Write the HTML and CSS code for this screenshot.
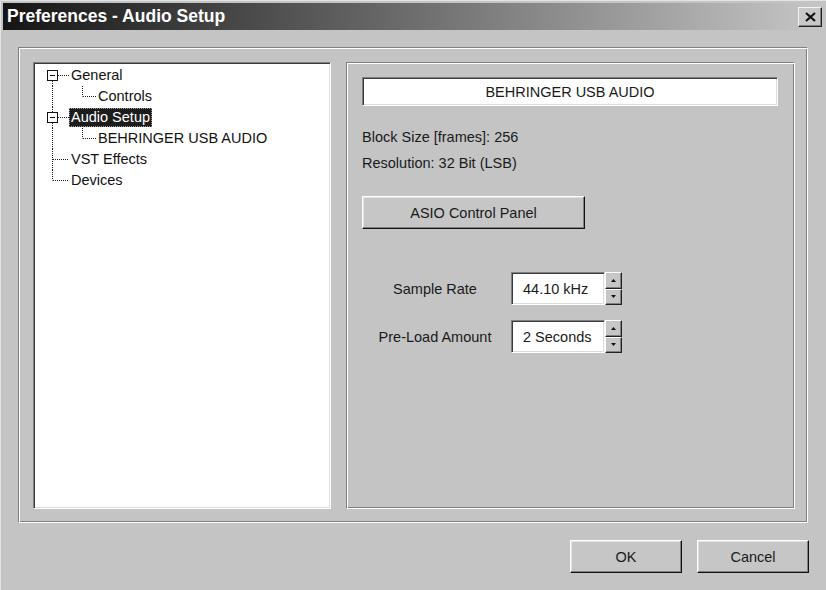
FILE: index.html
```html
<!DOCTYPE html>
<html lang="en">
<head>
    <meta charset="UTF-8">
    <title>Preferences - Audio Setup</title>
    <link rel="stylesheet" href="styles.css">
</head>
<body>
<div class="window">
    <div class="titlebar">
        <span class="title">Preferences - Audio Setup</span>
        <button class="close" title="Close">
            <svg width="11" height="10" viewBox="0 0 11 10"><path d="M1 1L10 9M10 1L1 9" stroke="#111" stroke-width="2.2" fill="none"/></svg>
        </button>
    </div>

    <div class="content">
        <div class="group">
            <!-- Tree of preference pages -->
            <div class="tree">
                <div class="node">
                    <svg class="gutter" width="34" height="21">
                        <rect x="12.5" y="5.5" width="10" height="10" fill="#fff" stroke="#111"/>
                        <path d="M15 10.5H20" stroke="#111"/>
                        <path d="M17.5 16V21M23 10.5H34" stroke="#222" stroke-dasharray="1 1"/>
                    </svg>
                    <span class="label">General</span>
                </div>
                <div class="node">
                    <svg class="gutter" width="61" height="21">
                        <path d="M17.5 0V21M47.5 0V10.5M48 10.5H61" stroke="#222" stroke-dasharray="1 1"/>
                    </svg>
                    <span class="label">Controls</span>
                </div>
                <div class="node">
                    <svg class="gutter" width="34" height="21">
                        <path d="M17.5 0V5M17.5 16V21M23 10.5H34" stroke="#222" stroke-dasharray="1 1"/>
                        <rect x="12.5" y="5.5" width="10" height="10" fill="#fff" stroke="#111"/>
                        <path d="M15 10.5H20" stroke="#111"/>
                    </svg>
                    <span class="label selected">Audio Setup</span>
                </div>
                <div class="node">
                    <svg class="gutter" width="61" height="21">
                        <path d="M17.5 0V21M47.5 0V10.5M48 10.5H61" stroke="#222" stroke-dasharray="1 1"/>
                    </svg>
                    <span class="label">BEHRINGER USB AUDIO</span>
                </div>
                <div class="node">
                    <svg class="gutter" width="34" height="21">
                        <path d="M17.5 0V21M18 10.5H34" stroke="#222" stroke-dasharray="1 1"/>
                    </svg>
                    <span class="label">VST Effects</span>
                </div>
                <div class="node">
                    <svg class="gutter" width="34" height="21">
                        <path d="M17.5 0V10.5M18 10.5H34" stroke="#222" stroke-dasharray="1 1"/>
                    </svg>
                    <span class="label">Devices</span>
                </div>
            </div>

            <!-- Audio device settings -->
            <div class="settings">
                <div class="device-name sunken">BEHRINGER USB AUDIO</div>
                <p class="info first">Block Size [frames]: 256</p>
                <p class="info">Resolution: 32 Bit (LSB)</p>
                <button class="btn asio">ASIO Control Panel</button>

                <div class="spin-row">
                    <span class="spin-label">Sample Rate</span>
                    <div class="spin-value sunken">44.10 kHz</div>
                    <div class="spin-buttons">
                        <button class="spin-btn"><svg width="5" height="3"><path d="M0 3H5L2.5 0Z" fill="#111"/></svg></button>
                        <button class="spin-btn"><svg width="5" height="3"><path d="M0 0H5L2.5 3Z" fill="#111"/></svg></button>
                    </div>
                </div>
                <div class="spin-row">
                    <span class="spin-label">Pre-Load Amount</span>
                    <div class="spin-value sunken">2 Seconds</div>
                    <div class="spin-buttons">
                        <button class="spin-btn"><svg width="5" height="3"><path d="M0 3H5L2.5 0Z" fill="#111"/></svg></button>
                        <button class="spin-btn"><svg width="5" height="3"><path d="M0 0H5L2.5 3Z" fill="#111"/></svg></button>
                    </div>
                </div>
            </div>
        </div>

        <div class="actions">
            <button class="btn dialog-btn">OK</button>
            <button class="btn dialog-btn">Cancel</button>
        </div>
    </div>
</div>
</body>
</html>
```

FILE: styles.css
```css
body {
    margin: 0;
    background-color: #c4c4c4;
    font-family: "Liberation Sans", Arial, sans-serif;
    font-size: 14.5px;
    color: #1a1a1a;
}
button {
    font-family: inherit;
    font-size: inherit;
    color: inherit;
    padding: 0;
    cursor: pointer;
}
.window {
    width: 826px;
    height: 590px;
    box-sizing: border-box;
    padding: 3px 3px 0 3px;
    background-color: #c4c4c4;
    border-top: 1px solid #e4e4e4;
    border-left: 1px solid #e4e4e4;
}
.titlebar {
    height: 27px;
    margin-top: -1px;
    margin-left: -1px;
    display: flex;
    align-items: center;
    justify-content: space-between;
    background: linear-gradient(to right, #151515, #c6c6c6);
}
.title {
    color: #fff;
    font-weight: bold;
    font-size: 17.5px;
    padding-left: 4px;
}
.close {
    width: 24px;
    height: 20px;
    margin-right: 1px;
    display: flex;
    align-items: center;
    justify-content: center;
    background-color: #c8c8c8;
    border: 1px solid;
    border-color: #f4f4f4 #222 #222 #f4f4f4;
    box-shadow: inset -1px -1px #808080;
}

.content {
    padding: 17px 14px 0 14px;
}
.group {
    display: flex;
    gap: 15px;
    width: 790px;
    height: 476px;
    box-sizing: border-box;
    padding: 14px 12px 13px 14px;
    border: 1px solid;
    border-color: #808080 #fff #fff #808080;
    box-shadow: inset 1px 1px #fff, inset -1px -1px #808080;
}

.sunken {
    background-color: #fff;
    border: 1px solid;
    border-color: #808080 #fff #fff #808080;
    box-shadow: inset 1px 1px #3a3a3a, inset -1px -1px #dcdcdc;
}
.tree {
    width: 298px;
    box-sizing: border-box;
    padding: 2px 1px;
    background-color: #fff;
    border: 1px solid;
    border-color: #808080 #fff #fff #808080;
    box-shadow: inset 1px 1px #3a3a3a, inset -1px -1px #dcdcdc;
    color: #111;
}
.node {
    display: flex;
    align-items: center;
    height: 21px;
}
.gutter {
    flex: none;
    display: block;
}
.label {
    line-height: 17px;
    padding: 0 1px;
    border: 1px solid transparent;
}
.selected {
    background-color: #1c1c1c;
    color: #fff;
    border: 1px dotted #9a9a9a;
}

.settings {
    flex: 1;
    box-sizing: border-box;
    padding: 14px 16px 0 15px;
    border: 1px solid;
    border-color: #808080 #fff #fff #808080;
    box-shadow: inset 1px 1px #fff, inset -1px -1px #808080;
}
.device-name {
    height: 29px;
    box-sizing: border-box;
    display: flex;
    align-items: center;
    justify-content: center;
}
.info {
    margin: 6px 0 0 0;
    line-height: 20px;
}
.info.first {
    margin-top: 21px;
}
.btn {
    height: 33px;
    background-color: #c6c6c6;
    border: 1px solid;
    border-color: #fff #111 #111 #fff;
    box-shadow: inset -1px -1px #808080, inset 1px 1px #e2e2e2;
}
.asio {
    display: block;
    width: 223px;
    margin-top: 23px;
}
.spin-row {
    display: flex;
    align-items: center;
    height: 33px;
    margin-top: 15px;
}
.asio + .spin-row {
    margin-top: 43px;
}
.spin-label {
    width: 146px;
    margin-right: 3px;
    text-align: center;
}
.spin-value {
    width: 94px;
    height: 33px;
    box-sizing: border-box;
    display: flex;
    align-items: center;
    padding-left: 11px;
}
.spin-buttons {
    display: flex;
    flex-direction: column;
    height: 33px;
}
.spin-btn {
    width: 17px;
    height: 16.5px;
    display: flex;
    align-items: center;
    justify-content: center;
    background-color: #c6c6c6;
    border: 1px solid;
    border-color: #fff #222 #222 #fff;
    box-shadow: inset -1px -1px #808080;
}
.spin-btn svg {
    display: block;
}

.actions {
    display: flex;
    justify-content: flex-end;
    gap: 15px;
    margin-top: 17px;
}
.dialog-btn {
    width: 112px;
}
```
